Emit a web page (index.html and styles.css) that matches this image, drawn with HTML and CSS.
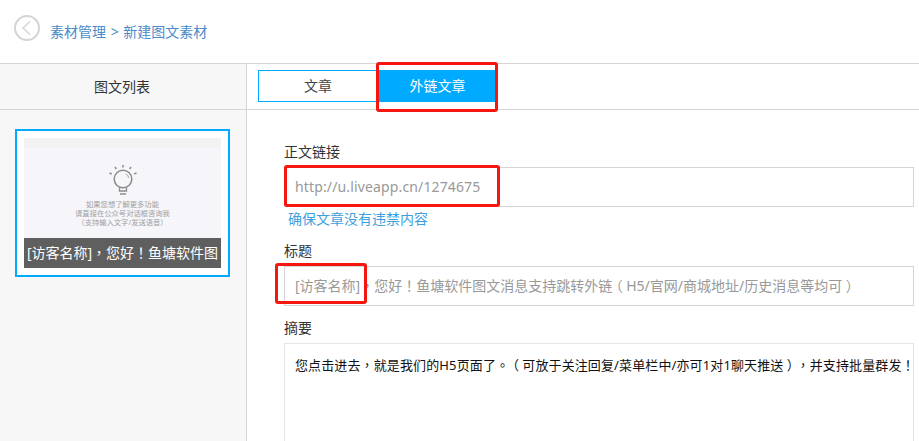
FILE: index.html
```html
<!DOCTYPE html>
<html lang="zh-CN">
<head>
<meta charset="utf-8">
<title>新建图文素材</title>
<link rel="stylesheet" href="styles.css">
</head>
<body>
<div class="page">
  <header class="topbar">
    <svg class="back" width="26" height="26" viewBox="0 0 26 26"><circle cx="13" cy="13" r="12" fill="none" stroke="#d4d4d4" stroke-width="2"/><path d="M16 6.500 9 13l7 6.500" fill="none" stroke="#d4d4d4" stroke-width="1.500"/></svg>
    <div class="crumbs">素材管理 &gt; 新建图文素材</div>
  </header>
  <div class="main">
    <aside class="side">
      <div class="side-head">图文列表</div>
      <div class="card">
        <div class="thumb">
          <div class="strip"></div>
          <div class="thumb-body">
            <svg class="bulb" width="28" height="32" viewBox="0 0 28 32" fill="none" stroke="#8c8c8c"><circle cx="14" cy="14" r="8.800" stroke-width="1.500"/><path d="M10.500 22.500v3.500h7v-3.500" stroke-width="1.300"/><path d="M11 29h6" stroke-width="1.500"/><path d="M14 0v2.500M6 2l1.300 2M22 2l-1.300 2M.5 8l2.200 1M27.500 8l-2.200 1" stroke-width="1.500"/><path d="M17 9a6.500 6.500 0 0 1 2.800 3.800" stroke-width=".8"/></svg>
            <p class="tip">如果您想了解更多功能<br>请直接在公众号对话框咨询我<br>（支持输入文字/发送语音）</p>
          </div>
          <div class="caption">[访客名称]<span lang="zh-TW">，</span>您好<span lang="zh-TW">！</span>鱼塘软件图</div>
        </div>
      </div>
    </aside>
    <section class="content">
      <div class="tabs">
        <div class="tab">文章</div>
        <div class="tab active">外链文章</div>
      </div>
      <form class="form">
        <div class="label first">正文链接</div>
        <div class="field link">http://u.liveapp.cn/1274675</div>
        <div class="hint">确保文章没有违禁内容</div>
        <div class="label title-label">标题</div>
        <div class="field">[访客名称]<span lang="zh-TW">，</span>您好<span lang="zh-TW">！</span>鱼塘软件图文消息支持跳转外链<span class="paren">（</span>H5/官网/商城地址/历史消息等均可<span class="paren">）</span></div>
        <div class="label summary-label">摘要</div>
        <div class="area">您点击进去<span lang="zh-TW">，</span>就是我们的H5页面了<span lang="zh-TW">。</span><span class="paren">（</span>可放于关注回复/菜单栏中/亦可1对1聊天推送<span class="paren">）</span><span lang="zh-TW">，</span>并支持批量群发<span lang="zh-TW">！</span></div>
      </form>
    </section>
  </div>
  <div class="mark mark-tab"></div>
  <div class="mark mark-link"></div>
  <div class="mark mark-title"></div>
</div>
</body>
</html>
```
FILE: styles.css
```css
* { box-sizing: border-box; }
html, body { margin: 0; height: 100%; overflow: hidden; background: #fff; }
body { font-family: "Noto Sans", "Noto Sans CJK SC", sans-serif; font-size: 14px; color: #333; text-spacing-trim: space-all; }
.page { position: relative; width: 919px; height: 441px; overflow: hidden; }
.topbar { height: 64px; border-bottom: 1px solid #d5d5d5; display: flex; align-items: flex-start; padding: 15px 0 0 14px; }
.back { display: block; }
.crumbs { margin: 9px 0 0 10px; line-height: 16px; font-size: 14px; color: #4a8bc9; white-space: pre; word-spacing: 1px; }
.main { display: flex; height: 377px; }
.side { width: 247px; background: #f7f7f7; border-right: 1px solid #d5d5d5; flex: none; }
.side-head { height: 46px; line-height: 45px; padding-right: 2px; border-bottom: 1px solid #d5d5d5; text-align: center; color: #333; background: #f7f7f7; }
.card { width: 215px; height: 148px; margin: 19px 0 0 15px; border: 2px solid #00aaff; background: #fff; padding: 7px; }
.thumb { height: 130px; display: flex; flex-direction: column; background: #f5f5fa; }
.strip { height: 10px; background: #f3f2f2; flex: none; }
.thumb-body { flex: 1; display: flex; flex-direction: column; align-items: center; padding-top: 17px; }
.bulb { display: block; }
.tip { margin: 3px 0 0; font-size: 7.300px; line-height: 9px; text-align: center; color: #a0a0a0; white-space: nowrap; }
.caption { height: 30px; flex: none; background: #5f5f5f; color: #fff; line-height: 30px; text-align: center; font-size: 14px; white-space: nowrap; overflow: hidden; }
.content { flex: 1; min-width: 0; }
.tabs { height: 46px; border-bottom: 1px solid #d5d5d5; display: flex; padding: 6px 0 0 11px; align-items: flex-start; }
.tab { width: 120px; height: 32px; border: 1px solid #00aaff; line-height: 30px; text-align: center; color: #444; }
.tab.active { width: 117px; padding-left: 2px; background: #00aaff; color: #fff; }
.form { padding: 0 5px 0 37px; }
.label { font-size: 14px; line-height: 20px; color: #333; }
.first { margin-top: 32px; }
.field { height: 40px; margin-top: 5px; border: 1px solid #d5d5d5; line-height: 38px; padding-left: 10px; color: #999; white-space: nowrap; overflow: hidden; }
.link { letter-spacing: .14px; }
.hint { margin: 3px 0 0 4px; line-height: 18px; color: #3b9fe0; }
.title-label { margin-top: 13px; }
.summary-label { margin-top: 12px; }
.area { height: 120px; margin-top: 5px; border: 1px solid #e5e5e5; padding: 11px 0 0 10px; line-height: 20px; font-size: 13px; letter-spacing: .12px; color: #111; white-space: nowrap; overflow: hidden; }
.paren { font-feature-settings: "halt"; padding: 0 .25em; }
.mark { position: absolute; border: 3px solid #f5170f; border-radius: 3px; }
.mark-tab { left: 376px; top: 62px; width: 122px; height: 50px; }
.mark-link { left: 284px; top: 165px; width: 216px; height: 42px; }
.mark-title { left: 275px; top: 263px; width: 92px; height: 41px; }
```
